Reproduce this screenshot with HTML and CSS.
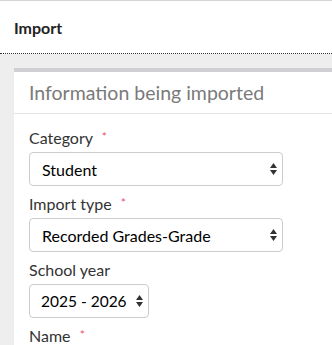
FILE: index.html
```html
<!DOCTYPE html>
<html lang="en">
  <head>
    <meta charset="UTF-8" />
    <meta name="viewport" content="width=device-width, initial-scale=1.0" />
    <title>Import</title>
    <link rel="stylesheet" href="styles.css">
  </head>
  <body>
    <div class="topbar">
      <h1>Import</h1>
    </div>
    <div class="content">
      <div class="panel">
        <div class="panel-head">Information being imported</div>
        <div class="panel-body">
          <div class="field">
            <label>Category <span class="req">*</span></label>
            <div class="select-wrap">
              <select>
                <option>Student</option>
              </select>
              <svg class="arrows" width="7" height="12" viewBox="0 0 7 12">
                <path d="M3.5 0 L7 5 L0 5 Z M0 7 L7 7 L3.5 12 Z" fill="#333" />
              </svg>
            </div>
          </div>
          <div class="field">
            <label>Import type <span class="req">*</span></label>
            <div class="select-wrap">
              <select>
                <option>Recorded Grades-Grade</option>
              </select>
              <svg class="arrows" width="7" height="12" viewBox="0 0 7 12">
                <path d="M3.5 0 L7 5 L0 5 Z M0 7 L7 7 L3.5 12 Z" fill="#333" />
              </svg>
            </div>
          </div>
          <div class="field">
            <label>School year</label>
            <div class="select-wrap small">
              <select>
                <option>2025 - 2026</option>
              </select>
              <svg class="arrows" width="7" height="12" viewBox="0 0 7 12">
                <path d="M3.5 0 L7 5 L0 5 Z M0 7 L7 7 L3.5 12 Z" fill="#333" />
              </svg>
            </div>
          </div>
          <div class="field">
            <label>Name <span class="req">*</span></label>
          </div>
        </div>
      </div>
    </div>
  </body>
</html>
```

FILE: styles.css
```css
body {
  margin: 0;
  font-family: Lato, "Liberation Sans", sans-serif;
  color: #333;
  background-color: #eee;
  height: 345px;
  overflow: hidden;
}
.topbar {
  background-color: white;
  border-top: 1px solid #d5d5d5;
  border-bottom: 1px dotted #333;
  height: 52px;
  display: flex;
  align-items: center;
  padding-left: 14px;
}
.topbar h1 {
  margin: 0;
  font-size: 16px;
  font-weight: bold;
  color: #222;
}
.content {
  padding: 14px 0 0 14px;
}
.panel {
  background-color: white;
  border-top: 4px solid #d0d0d3;
  height: 400px;
}
.panel-head {
  padding: 0 15px;
  height: 41px;
  line-height: 41px;
  font-size: 19.5px;
  color: #7a7a7a;
  border-bottom: 1px solid #e5e5e5;
}
.panel-body {
  padding: 14px 15px;
}
.field {
  margin-bottom: 8px;
}
.field label {
  display: block;
  font-size: 16px;
  margin-bottom: 5px;
}
.req {
  color: #ec4f6c;
  font-size: 12px;
  vertical-align: 3px;
  margin-left: 5px;
}
.select-wrap {
  position: relative;
  width: 254px;
}
.select-wrap.small {
  width: 120px;
}
.select-wrap select {
  width: 100%;
  height: 34px;
  appearance: none;
  -webkit-appearance: none;
  border: 1px solid #ccc;
  border-radius: 4px;
  background-color: white;
  padding: 0 12px;
  font-family: Lato, "Liberation Sans", sans-serif;
  font-size: 16px;
  color: #000;
}
.select-wrap.small select {
  padding: 0 11px;
  font-size: 15.5px;
}
.select-wrap .arrows {
  position: absolute;
  right: 6px;
  top: 11px;
  pointer-events: none;
}
```
